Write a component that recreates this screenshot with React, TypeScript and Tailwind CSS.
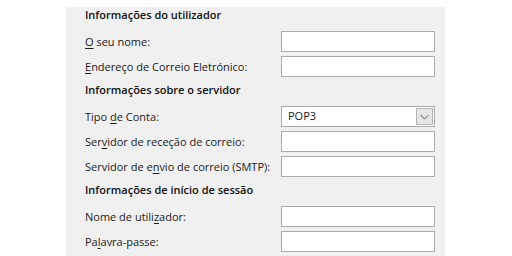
const FONT = { fontFamily: '"Open Sans", "Noto Sans", sans-serif' };

function Label({ pre, key_, post }: { pre: string; key_: string; post: string }) {
  return (
    <span className="whitespace-nowrap text-[11px] leading-[16px] text-[#1a1a1a]">
      {pre}
      <span className="underline underline-offset-2">{key_}</span>
      {post}
    </span>
  );
}

function Row({ label, children }: { label: React.ReactNode; children?: React.ReactNode }) {
  return (
    <div className="flex h-[21px] items-center">
      <div className="w-[196px] shrink-0 pb-[3px]">{label}</div>
      {children ?? <div className="h-[21px] w-[154px] border border-[#ababab] bg-white" />}
    </div>
  );
}

function Header({ children }: { children: React.ReactNode }) {
  return (
    <div className="h-[16px] whitespace-nowrap text-[11px] font-semibold leading-[16px] text-[#111]">{children}</div>
  );
}

function Select() {
  return (
    <div className="flex h-[21px] w-[154px] items-center justify-between border border-[#ababab] bg-white pl-[6px] pr-[1px]">
      <span className="text-[11px] text-[#1a1a1a]">POP3</span>
      <div className="flex h-[17px] w-[17px] items-center justify-center border border-[#b4b4b4] bg-[#e6e6e6]">
        <svg width="9" height="6" viewBox="0 0 9 6" fill="none">
          <path d="M0.5 1 L4.5 5 L8.5 1" stroke="#555" strokeWidth="1" />
        </svg>
      </div>
    </div>
  );
}

export default function App() {
  return (
    <div className="h-[256px] w-[512px] bg-white" style={FONT}>
      <div className="ml-[66px] mt-[7px] h-[249px] w-[379px] bg-[#f0f0f0] pl-[19px]">
        <Header>Informações do utilizador</Header>
        <div className="mt-[8px] flex flex-col gap-[4px]">
          <Row label={<Label pre="" key_="O" post=" seu nome:" />} />
          <Row label={<Label pre="" key_="E" post="ndereço de Correio Eletrónico:" />} />
        </div>
        <div className="pb-[8px] pt-[5px]">
          <Header>Informações sobre o servidor</Header>
        </div>
        <div className="flex flex-col gap-[4px]">
          <Row label={<Label pre="Tipo " key_="d" post="e Conta:" />}>
            <Select />
          </Row>
          <Row label={<Label pre="Ser" key_="v" post="idor de receção de correio:" />} />
          <Row label={<Label pre="Servidor de e" key_="n" post="vio de correio (SMTP):" />} />
        </div>
        <div className="pb-[8px] pt-[5px]">
          <Header>Informações de início de sessão</Header>
        </div>
        <div className="flex flex-col gap-[4px]">
          <Row label={<Label pre="Nome de utili" key_="z" post="ador:" />} />
          <Row label={<Label pre="Pa" key_="l" post="avra-passe:" />} />
        </div>
      </div>
    </div>
  );
}
